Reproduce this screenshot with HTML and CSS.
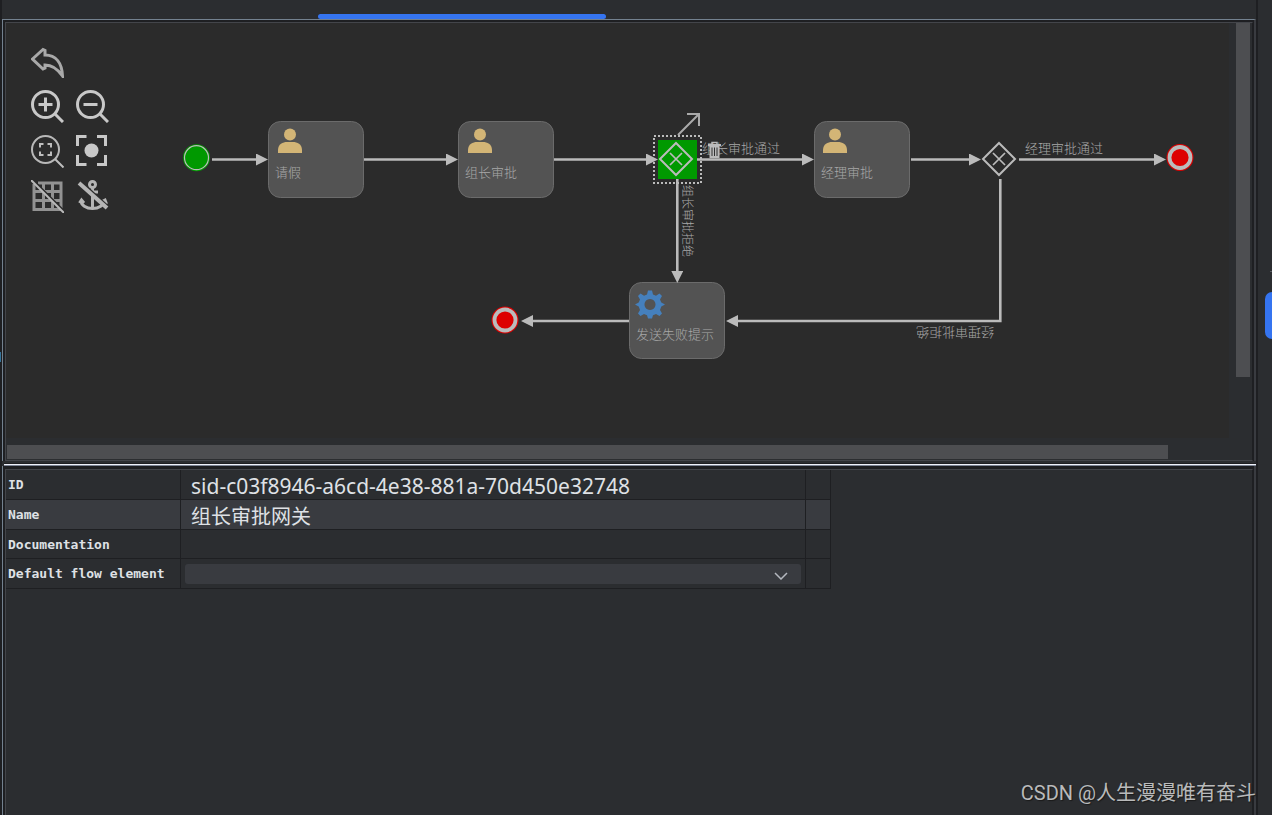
FILE: index.html
```html
<!DOCTYPE html>
<html lang="zh-CN">
<head>
<meta charset="utf-8">
<title>BPMN</title>
<link rel="stylesheet" href="styles.css">
</head>
<body>
<div class="app">
  <div class="gutter-left"><span class="gutter-mark"></span></div>
  <main class="editor">
    <div class="tab-bar"><div class="tab-indicator"></div></div>
    <section class="canvas-frame">
      <div class="canvas-pane">
        <div class="canvas">
          <svg class="diagram" viewBox="6 23 1223 415" preserveAspectRatio="xMinYMin meet">
            <defs>
              <marker id="arrow" viewBox="0 0 12 12" refX="0" refY="6" markerWidth="12" markerHeight="12" markerUnits="userSpaceOnUse" orient="auto"><path d="M0 0L12 6L0 12Z" fill="#bbb"/></marker>
              <g id="task"><rect x="0.5" y="0.5" width="95" height="76" rx="12" class="task"/></g>
              <g id="user" fill="#d3b576"><circle cx="12" cy="6.500" r="6"/><path d="M0 25V22C0 16 5 14 9 14H15C19 14 24 16 24 22V25Z"/></g>
              <g id="end"><circle r="13.500" fill="#d00"/><circle r="10.500" fill="#d00" stroke="#bbb" stroke-width="3.800"/></g>
              <g id="gateway" fill="none" stroke="#bbb"><path d="M0-16L16 0L0 16L-16 0Z" stroke-width="2"/><path d="M-6-6L6 6M6-6L-6 6" stroke-width="1.700"/></g>
            </defs>
            <circle cx="196.500" cy="157.700" r="13.500" fill="#090"/>
            <circle cx="196.500" cy="157.700" r="12" fill="none" stroke="#bbb" stroke-width="1.200"/>
            <use href="#task" x="268" y="121"/><use href="#user" x="278" y="128"/>
            <use href="#task" x="458" y="121"/><use href="#user" x="468" y="128"/>
            <use href="#task" x="814" y="121"/><use href="#user" x="823" y="128"/>
            <use href="#task" x="629" y="282"/>
            <path fill="#4580bd" fill-rule="evenodd" d="M648 290.500h4l1 4 3 1.300 3.500-2.300 2.500 2.500-2 3.500 1.300 3 3.700 2-3.700 2-1.300 3.500 2 3.500-2.500 2.500-3.500-2-3 1.300-1 3.200h-4l-1-3.200-3-1.300-3.500 2-2.500-2.500 2-3.500-1.300-3.500-3.700-2 3.700-2 1.300-3-2-3.500 2.500-2.500 3.500 2.300 3-1.300ZM650 299a5.500 5.500 0 1 0 .01 0Z"/>
            <text x="275" y="177" class="label">请假</text>
            <text x="465" y="177" class="label">组长审批</text>
            <text x="821" y="177" class="label">经理审批</text>
            <text x="636" y="339" class="label">发送失败提示</text>
            <rect x="658" y="140" width="39" height="39" fill="#090"/>
            <use href="#gateway" x="676" y="159"/>
            <use href="#gateway" x="999" y="159"/>
            <use href="#end" x="1180" y="157.500"/>
            <use href="#end" x="505" y="320"/>
            <g class="flow">
              <path d="M212 159.500H256"/><path d="M364 159.500H446"/><path d="M554 159.500H646"/>
              <path d="M697 159.500H802"/><path d="M911 159.500H969"/><path d="M1019 159.500H1154"/>
              <path d="M677.300 179V271"/><path d="M1000.300 179V321H738"/><path d="M629 321H533"/>
            </g>
            <rect x="654" y="136" width="47" height="47" fill="none" stroke="#bbb" stroke-width="2" stroke-dasharray="2 2"/>
            <text x="702" y="153" class="label">组长审批通过</text>
            <text x="1025" y="153" class="label">经理审批通过</text>
            <text transform="translate(683 185) rotate(90)" class="label small">组长审批拒绝</text>
            <text transform="translate(994 328) rotate(180)" class="label">经理审批拒绝</text>
            <path d="M678 135L699 114M687 114H699V126" fill="none" stroke="#aaa" stroke-width="2"/>
            <path d="M712 144V142.500H717V144" fill="none" stroke="#bbb" stroke-width="1.500"/>
            <path d="M708 144H721V146H719.500V158H709.500V146H708Z" fill="#bbb"/>
            <path d="M712 147.500V156M714.500 147.500V156M717 147.500V156" stroke="#303030"/>
          </svg>
          <div class="tools">
            <button class="tool wide" type="button" aria-label="Undo"><svg viewBox="0 0 33 33"><path d="M1.500 14L12 4.500L14 5.500V10C25 10 31 18 31.500 31C26 23 21 20 14 20V23L12 24Z" class="ink dim"/></svg></button>
            <button class="tool" type="button" aria-label="Zoom in"><svg viewBox="0 0 33 33"><circle cx="14.500" cy="14.500" r="13" class="ink bold"/><path d="M14.500 7.500V21.500M7.500 14.500H21.500M23.500 23.500L32 32" class="ink bold"/></svg></button>
            <button class="tool" type="button" aria-label="Zoom out"><svg viewBox="0 0 33 33"><circle cx="14.500" cy="14.500" r="13" class="ink bold"/><path d="M7.500 14.500H21.500M23.500 23.500L32 32" class="ink bold"/></svg></button>
            <button class="tool" type="button" aria-label="Fit to window"><svg viewBox="0 0 33 33"><circle cx="14.500" cy="14.500" r="13.500" class="ink thin"/><path d="M24 24L32.500 32.500M9 12.500V9H12.500M16.500 9H20V12.500M20 16.500V20H16.500M12.500 20H9V16.500" class="ink"/></svg></button>
            <button class="tool" type="button" aria-label="Actual size"><svg viewBox="0 0 33 33"><circle cx="15.500" cy="15.500" r="7" fill="#c8c8c8"/><path d="M1.500 11V1.500H10.500M21 1.500H29.500V11M29.500 20V29.500H21M10.500 29.500H1.500V20" class="ink bold"/></svg></button>
            <button class="tool" type="button" aria-label="Toggle grid"><svg viewBox="0 0 33 33"><path d="M3 4V29.500H30V3H7M12.500 3V29.500M21.500 3V29.500M3 11.500H30M3 20.500H30" class="ink dim mesh"/><path d="M2 0L33 31" class="gap"/><path d="M0 0L33 33" class="ink thin"/></svg></button>
            <button class="tool" type="button" aria-label="Toggle anchors"><svg viewBox="0 0 33 33"><circle cx="16.500" cy="4.500" r="3" class="ink anchor"/><path d="M16.500 8V28M12 12H22M5 21C5 25 10 28.500 16.500 28.500S28 25 28 21M3.500 23L5.500 20L8 23M25 22L29 20L30.500 24" class="ink anchor"/><path d="M5.500 2L33 27" class="gap"/><path d="M3 3L31 28" class="ink slash"/></svg></button>
          </div>
        </div>
        <div class="scroll-v"><div class="thumb-v"></div></div>
        <div class="scroll-h"><div class="thumb-h"></div></div>
      </div>
    </section>
    <div class="splitter"></div>
    <section class="props-frame">
      <div class="props-pane">
        <table class="props">
          <colgroup><col class="col-key"><col class="col-value"><col class="col-more"></colgroup>
          <tbody>
            <tr><th scope="row"><label for="p-id">ID</label></th><td><input id="p-id" class="latin" type="text" value="sid-c03f8946-a6cd-4e38-881a-70d450e32748"></td><td></td></tr>
            <tr class="selected"><th scope="row"><label for="p-name">Name</label></th><td><input id="p-name" type="text" value="组长审批网关"></td><td></td></tr>
            <tr class="short"><th scope="row"><label for="p-doc">Documentation</label></th><td><input id="p-doc" type="text"></td><td></td></tr>
            <tr><th scope="row"><label for="p-flow">Default flow element</label></th><td><div class="combo"><select id="p-flow"><option></option></select><svg class="chevron" viewBox="0 0 14 8"><path d="M1 1L7 7L13 1"/></svg></div></td><td></td></tr>
          </tbody>
        </table>
      </div>
    </section>
  </main>
  <aside class="gutter-right"><span class="tick"></span><div class="side-tab"></div></aside>
  <div class="credit">CSDN @人生漫漫唯有奋斗</div>
</div>
</body>
</html>
```
FILE: styles.css
```css
* { box-sizing: border-box; }

body {
  margin: 0;
  background: #2b2d30;
  color: #dfe1e5;
  font-family: "Noto Sans", "Noto Sans CJK SC", sans-serif;
}

.app {
  position: relative;
  display: flex;
  min-height: 100vh;
  overflow: hidden;
}

.gutter-left {
  width: 2px;
  padding-top: 352px;
  background: #1e1f22;
}

.gutter-mark {
  display: block;
  width: 1px;
  height: 10px;
  background: #34749c;
}

.editor {
  flex: 1;
  min-width: 0;
  display: flex;
  flex-direction: column;
}

.tab-bar {
  height: 19px;
  padding: 14px 0 0 316px;
}

.tab-indicator {
  width: 288px;
  height: 5px;
  border-radius: 3px;
  background: #3574f0;
}

.canvas-frame,
.props-frame {
  border: solid #73818f;
  border-width: 1px 0 0 1px;
  background: #1e1f22;
  padding: 2px 1px 0 2px;
  border-right: 2px solid #393b40;
}

.canvas-pane {
  display: grid;
  grid-template-columns: 1fr 23px;
  grid-template-rows: auto 22px;
  border: 1px solid #43454a;
  border-right-color: #1e1f22;
  background: #2b2d30;
}

.canvas {
  position: relative;
  background: #2b2b2b;
}

.diagram {
  display: block;
  width: 100%;
  height: 415px;
}

.task {
  fill: #535353;
  stroke: #6b6b6b;
}

.flow path {
  fill: none;
  stroke: #bbb;
  stroke-width: 2.6;
  marker-end: url(#arrow);
}

.label {
  font: 300 13px "Noto Sans CJK SC", sans-serif;
  fill: #a8a8a8;
}

.small { font-size: 12px; }

.tools {
  position: absolute;
  top: 22px;
  left: 25px;
  display: grid;
  grid-template-columns: 33px 33px;
  gap: 12px;
}

.tool {
  width: 33px;
  height: 33px;
  padding: 0;
  border: 0;
  background: none;
}

.tool svg {
  display: block;
  width: 33px;
  height: 33px;
}

.wide { grid-column: span 2; }

.ink {
  fill: none;
  stroke: #bdbdbd;
  stroke-width: 2;
}

.dim { stroke: #a9a9a9; stroke-width: 3; }
.mesh { stroke: #929292; }
.bold { stroke: #c8c8c8; stroke-width: 3; }
.thin { stroke: #b8b8b8; stroke-width: 2; }
.anchor { stroke: #b5b5b5; stroke-width: 3; }
.slash { stroke: #b5b5b5; stroke-width: 4; }

.gap {
  fill: none;
  stroke: #2b2b2b;
  stroke-width: 2;
}

.scroll-v { padding-left: 7px; }

.thumb-v {
  width: 14px;
  height: 354px;
  background: #4d4e51;
}

.scroll-h {
  grid-column: span 2;
  padding: 7px 1px 1px;
}

.thumb-h {
  width: 93.3%;
  height: 14px;
  background: #4d4e51;
}

.splitter {
  height: 5px;
  border-top: 2px solid #2b2d30;
  border-bottom: 1px solid #7c8494;
  background: #f0f2fa;
  margin-left: 2px;
  box-shadow: inset 0 1px #1e1f22;
}

.props-frame {
  flex: 1;
  padding-top: 3px;
  border-top-width: 0;
  display: flex;
}

.props-pane {
  flex: 1;
  border-top: 1px solid #43454a;
  border-left: 1px solid #43454a;
  border-right: 1px solid #1e1f22;
  background: #2b2d30;
}

.props {
  width: 825px;
  max-width: 100%;
  table-layout: fixed;
  border-collapse: separate;
  border-spacing: 0;
}

.col-key { width: 175px; }
.col-more { width: 25px; }

.props th,
.props td {
  height: 30px;
  padding: 0;
  border-right: 1px solid #1e1f22;
  border-bottom: 1px solid #1e1f22;
}

.props .short th,
.props .short td { height: 29px; }

.props th {
  padding-left: 2px;
  text-align: left;
  font: bold 13px "DejaVu Sans Mono", monospace;
}

.selected { background: #393b40; }

.props input {
  display: block;
  width: 100%;
  height: 28px;
  padding: 2px 10px 0;
  border: 0;
  background: none;
  color: #dfe1e5;
  font: 20px "Noto Sans", "Noto Sans CJK SC", sans-serif;
}

.props .latin { font-size: 21px; }

.combo {
  position: relative;
  padding: 0 4px;
}

.combo select {
  display: block;
  width: 100%;
  height: 20px;
  border: 0;
  border-radius: 3px;
  appearance: none;
  background: #393b40;
  color: #dfe1e5;
}

.chevron {
  position: absolute;
  top: 8px;
  right: 17px;
  width: 14px;
  height: 8px;
  fill: none;
  stroke: #b4b8bf;
  stroke-width: 1.5;
  pointer-events: none;
}

.gutter-right {
  position: relative;
  width: 16px;
  border-left: 2px solid #1e1f22;
  display: flex;
  flex-direction: column;
  align-items: flex-end;
  padding-top: 271px;
}

.tick {
  width: 2px;
  height: 1px;
  background: #5a5d63;
}

.side-tab {
  width: 7px;
  height: 47px;
  margin-top: 20px;
  border-radius: 7px 0 0 7px;
  background: #3574f0;
}

.credit {
  position: absolute;
  right: 16px;
  bottom: 7px;
  color: #b9babb;
  font: 20px/29px Roboto, "Noto Sans CJK SC", sans-serif;
  text-shadow: 1px 1px 1px #1a1a1a;
}
```
